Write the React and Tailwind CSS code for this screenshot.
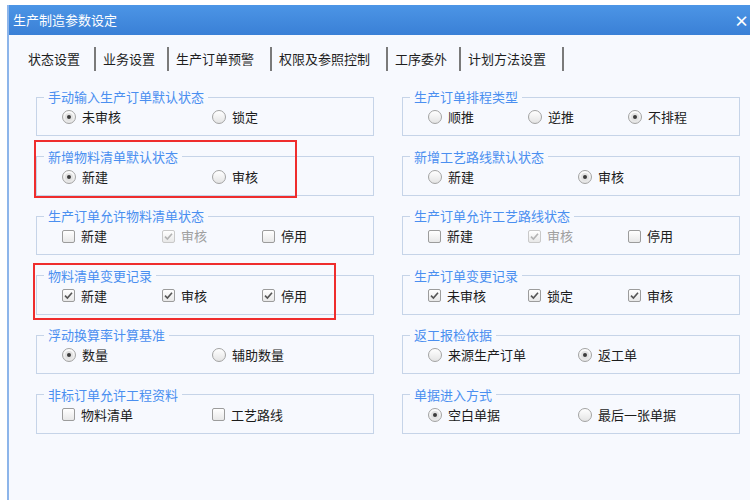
import React from 'react';

// ─── Data ─────────────────────────────────────────────────────────────────────
const TABS = [
  { label: '状态设置', w: 'w-[73px]' },
  { label: '业务设置', w: 'w-[71px]' },
  { label: '生产订单预警', w: 'w-[101px]' },
  { label: '权限及参照控制', w: 'w-[114px]' },
  { label: '工序委外', w: 'w-[71px]' },
  { label: '计划方法设置', w: 'w-[101px]' },
];

const GROUPS = [
  { title: '手动输入生产订单默认状态', type: 'radio', options: [{ label: '未审核', on: true }, { label: '锁定' }] },
  { title: '生产订单排程类型', type: 'radio', options: [{ label: '顺推' }, { label: '逆推' }, { label: '不排程', on: true }] },
  { title: '新增物料清单默认状态', type: 'radio', options: [{ label: '新建', on: true }, { label: '审核' }] },
  { title: '新增工艺路线默认状态', type: 'radio', options: [{ label: '新建' }, { label: '审核', on: true }] },
  { title: '生产订单允许物料清单状态', type: 'check', options: [{ label: '新建' }, { label: '审核', on: true, disabled: true }, { label: '停用' }] },
  { title: '生产订单允许工艺路线状态', type: 'check', options: [{ label: '新建' }, { label: '审核', on: true, disabled: true }, { label: '停用' }] },
  { title: '物料清单变更记录', type: 'check', options: [{ label: '新建', on: true }, { label: '审核', on: true }, { label: '停用', on: true }] },
  { title: '生产订单变更记录', type: 'check', options: [{ label: '未审核', on: true }, { label: '锁定', on: true }, { label: '审核', on: true }] },
  { title: '浮动换算率计算基准', type: 'radio', options: [{ label: '数量', on: true }, { label: '辅助数量' }] },
  { title: '返工报检依据', type: 'radio', options: [{ label: '来源生产订单' }, { label: '返工单', on: true }] },
  { title: '非标订单允许工程资料', type: 'check', options: [{ label: '物料清单' }, { label: '工艺路线' }] },
  { title: '单据进入方式', type: 'radio', options: [{ label: '空白单据', on: true }, { label: '最后一张单据' }] },
];

// ─── Controls ─────────────────────────────────────────────────────────────────
const Radio = ({ on }) => (
  <span className="w-[14px] h-[14px] shrink-0 rounded-full border border-[#a3a3a3] bg-gradient-to-b from-[#ffffff] to-[#e4e4e4] flex items-center justify-center">
    {on && (
      <span className="w-[8px] h-[8px] rounded-full bg-[#e2e2e2] flex items-center justify-center">
        <span className="w-[4px] h-[4px] rounded-full bg-[#3c3c3c]" />
      </span>
    )}
  </span>
);

const Check = ({ on, disabled }) => (
  <span
    className={`w-[13px] h-[13px] shrink-0 rounded-[2px] border bg-gradient-to-b from-[#ffffff] to-[#e8e8e8] flex items-center justify-center ${
      disabled ? 'border-[#c9c9c9]' : 'border-[#9c9c9c]'
    }`}
  >
    {on && (
      <svg width="11" height="11" viewBox="0 0 11 11">
        <path
          d="M2 5.6 L4.4 8 L9 2.8"
          fill="none"
          stroke={disabled ? '#b3b3b3' : '#555'}
          strokeWidth="1.6"
        />
      </svg>
    )}
  </span>
);

// ─── Group box ────────────────────────────────────────────────────────────────
const Group = ({ title, type, options }) => (
  <fieldset className="border border-[#c6d4e8] px-[7px] pb-[9px]">
    <legend className="px-[4px] text-[13px] leading-4 text-[#4a8ff0]">{title}</legend>
    <div className="mt-[3px] h-[18px] pl-[18px] flex items-center">
      {options.map((o) => (
        <div
          key={o.label}
          className={`flex items-center gap-[6px] ${options.length === 3 ? 'w-[100px]' : 'w-[150px]'}`}
        >
          {type === 'radio' ? <Radio on={o.on} /> : <Check on={o.on} disabled={o.disabled} />}
          <span className={`text-[13px] leading-4 ${o.disabled ? 'text-[#a0a0a0]' : 'text-[#1c1c1c]'}`}>
            {o.label}
          </span>
        </div>
      ))}
    </div>
  </fieldset>
);

// ─── App ──────────────────────────────────────────────────────────────────────
export default function App() {
  return (
    <div
      className="relative w-[750px] h-[500px] overflow-hidden bg-white pt-[5px] pl-[7px]"
      style={{ fontFamily: '"Noto Sans CJK SC", "Liberation Sans", sans-serif' }}
    >
      <div className="w-[762px] h-[495px] flex flex-col border-l-2 border-[#8db5ea] bg-[#f7f9fe]">
        {/* title bar */}
        <div className="h-[30px] shrink-0 flex items-center pl-[4px] pr-[20px] bg-gradient-to-b from-[#4c95e6] to-[#3a80d6]">
          <span className="text-[13px] text-white">生产制造参数设定</span>
          <span className="ml-auto text-[15px] font-bold leading-none text-white">×</span>
        </div>

        {/* tabs */}
        <div className="mt-[12px] h-[24px] pl-[12px] flex items-stretch">
          {TABS.map((t) => (
            <React.Fragment key={t.label}>
              <div className={`${t.w} pl-[7px] flex items-center text-[13px] text-[#1e1e1e]`}>{t.label}</div>
              <div className="w-[2px] bg-[#7a7a7a]" />
            </React.Fragment>
          ))}
        </div>

        {/* groups */}
        <div className="mt-[18px] pl-[27px] grid grid-cols-[338px_338px] gap-x-[28px] gap-y-[12.6px]">
          {GROUPS.map((g) => (
            <Group key={g.title} {...g} />
          ))}
        </div>
      </div>

      {/* red highlight boxes */}
      <div className="absolute left-[34px] top-[140px] w-[263px] h-[58px] border-2 border-[#ef2d2d]" />
      <div className="absolute left-[33px] top-[263px] w-[303px] h-[57px] border-2 border-[#ef2d2d]" />
    </div>
  );
}
